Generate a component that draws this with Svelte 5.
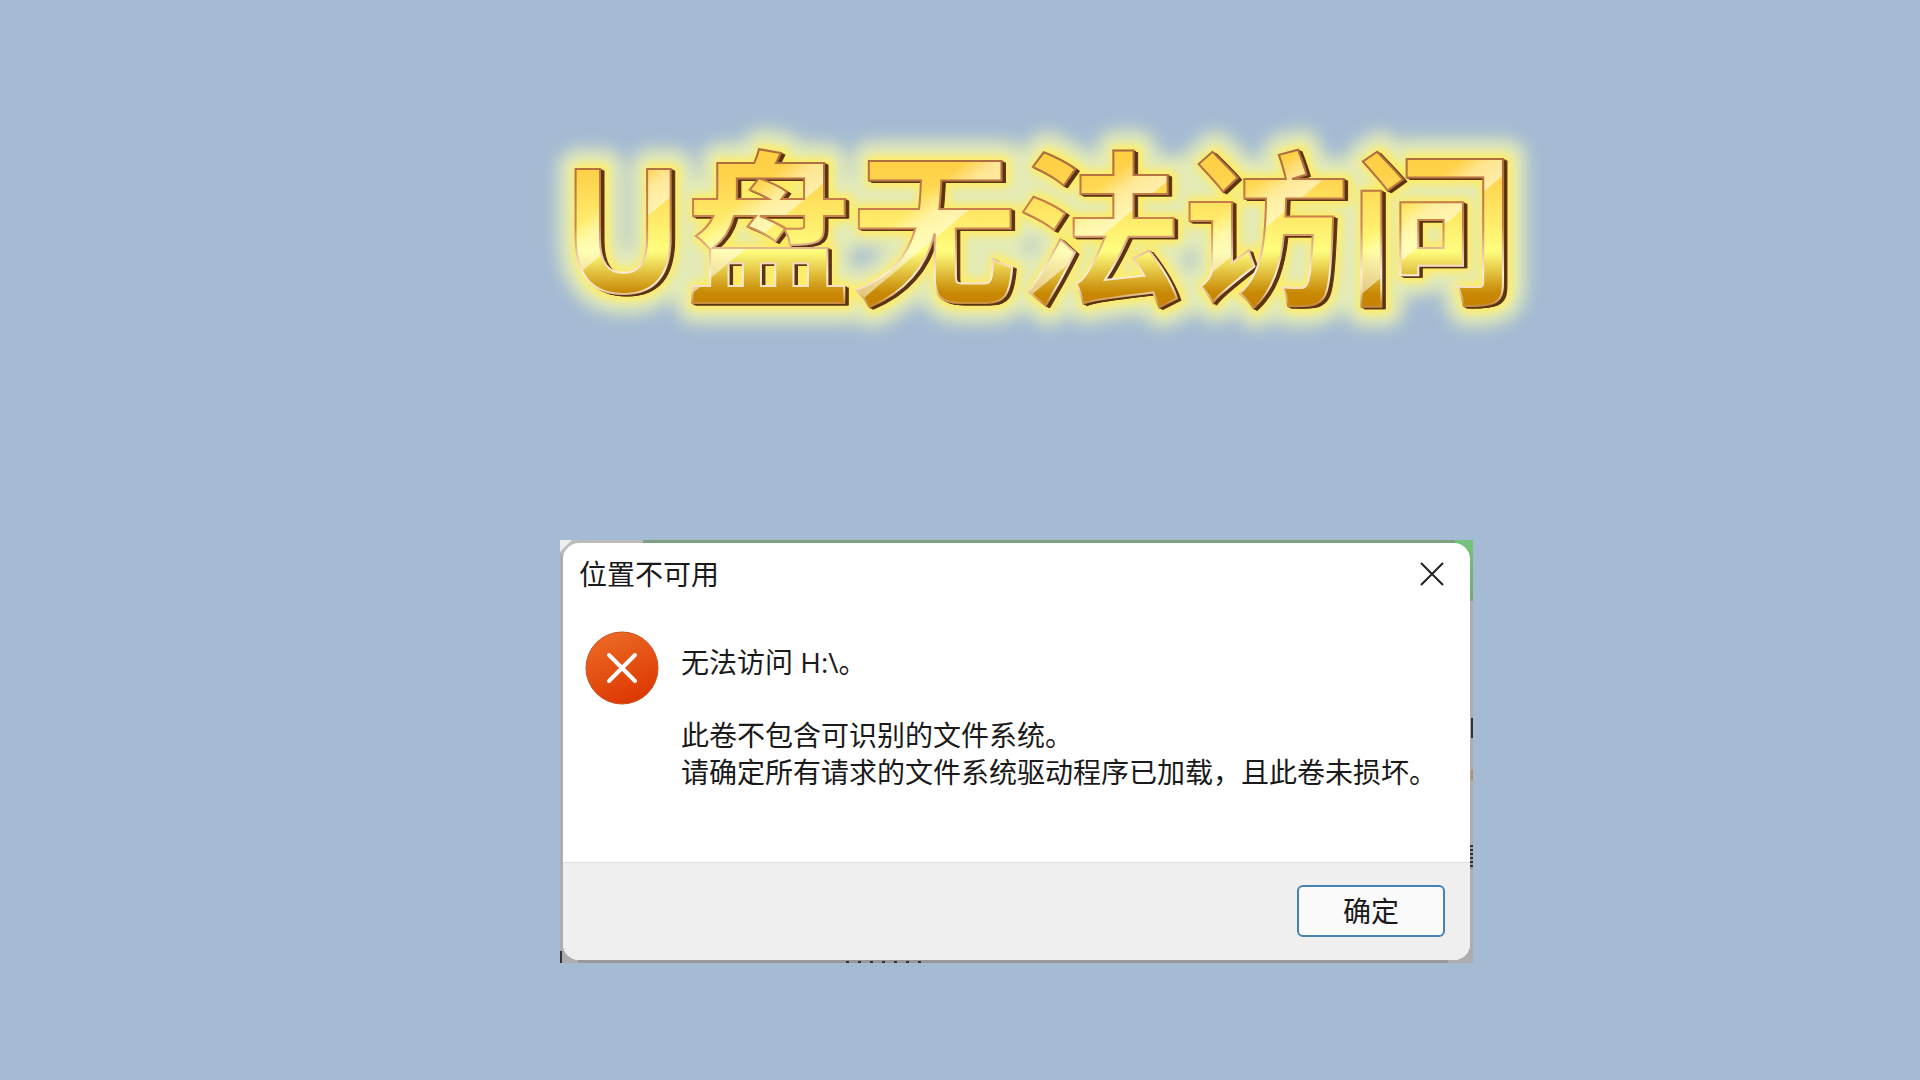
<script>
    const title = "U盘无法访问";
    const depth = [1, 2, 3, 4];

    // one shine per character: cell start, cell width, where the streak meets the baseline
    const shines = [
        { cell: 0, width: 121, foot: 0 },
        { cell: 121, width: 167, foot: 137 },
        { cell: 288, width: 166, foot: 314 },
        { cell: 454, width: 166, foot: 478 },
        { cell: 620, width: 166, foot: 632 },
        { cell: 786, width: 175, foot: 807 },
    ];

    let open = true;
    const close = () => (open = false);
</script>

<svelte:head>
    <title>{title}</title>
</svelte:head>

<main>
    <h1>
        <svg class="banner" width="968" height="200" role="img" aria-label={title}>
            <defs>
                <linearGradient id="gold" gradientUnits="userSpaceOnUse" x1="0" y1="28" x2="0" y2="180">
                    <stop offset="0" stop-color="#ffcf40" />
                    <stop offset="0.18" stop-color="#ffd24c" />
                    <stop offset="0.68" stop-color="#fffd7e" />
                    <stop offset="0.95" stop-color="#c88a06" />
                    <stop offset="1" stop-color="#c88400" />
                </linearGradient>
                <linearGradient id="rim" gradientUnits="userSpaceOnUse" x1="0" y1="28" x2="0" y2="184">
                    <stop offset="0" stop-color="#a86a3c" />
                    <stop offset="0.5" stop-color="#cf8550" />
                    <stop offset="0.8" stop-color="#fdeedd" />
                    <stop offset="0.9" stop-color="#f6dfc0" />
                    <stop offset="1" stop-color="#c48a3c" />
                </linearGradient>
                <linearGradient id="streak" gradientUnits="userSpaceOnUse" x1="-26" y1="139" x2="0" y2="170">
                    <stop offset="0" stop-color="#ffe" stop-opacity="0" />
                    <stop offset="0.5" stop-color="#ffe" stop-opacity="0.45" />
                    <stop offset="0.98" stop-color="#ffe" stop-opacity="0.55" />
                    <stop offset="1" stop-color="#ffe" stop-opacity="0" />
                </linearGradient>
                <pattern id="shine" patternUnits="userSpaceOnUse" width="968" height="200">
                    {#each shines as s}
                        <g transform="translate({s.foot} 0)">
                            <rect x={s.cell - s.foot} width={s.width} height="200" fill="url(#streak)" />
                        </g>
                    {/each}
                </pattern>
            </defs>
            <use href="#banner-text" class="halo" x="3" />
            <use href="#banner-text" class="glow" x="3" y="1" />
            {#each depth as d}
                <use href="#banner-text" class="side" x={d} y={d / 2} />
            {/each}
            <use href="#banner-text" fill="url(#gold)" />
            <use href="#banner-text" fill="url(#shine)" />
            <g class="rim">
                <text id="banner-text" x="1" y="172">{title}</text>
            </g>
        </svg>
    </h1>

    {#if open}
        <div class="frame">
            <div class="dialog" role="alertdialog" aria-labelledby="caption" aria-describedby="message">
                <header>
                    <h2 id="caption">位置不可用</h2>
                    <button class="close" aria-label="关闭" on:click={close}>
                        <svg width="24" height="24" viewBox="0 0 24 24">
                            <path d="M1 1 23 23M23 1 1 23" />
                        </svg>
                    </button>
                </header>
                <div class="body">
                    <svg class="error" width="74" height="74" viewBox="0 0 74 74" aria-hidden="true">
                        <defs>
                            <linearGradient id="red" x1="0.3" y1="0" x2="0.7" y2="1">
                                <stop offset="0" stop-color="#ec6a25" />
                                <stop offset="1" stop-color="#dc3600" />
                            </linearGradient>
                        </defs>
                        <circle cx="37" cy="37" r="36" fill="url(#red)" stroke="#c8501c" />
                        <path d="M24 24 50 50M50 24 24 50" />
                    </svg>
                    <div id="message">
                        <p>无法访问 H:\。</p>
                        <p>此卷不包含可识别的文件系统。<br />请确定所有请求的文件系统驱动程序已加载，且此卷未损坏。</p>
                    </div>
                </div>
                <footer>
                    <button class="ok" on:click={close}>确定</button>
                </footer>
            </div>
        </div>
    {/if}
</main>

<style>
    :global(body){
        margin: 0;
        background: #a5bbd3;
    }
    main{
        box-sizing: border-box;
        min-height: 100vh;
        padding: 120px 32px 116px 560px;
        display: flex;
        flex-direction: column;
        align-items: flex-start;
        gap: 220px;
        font-family: "Open Sans", "Noto Sans CJK SC", sans-serif;
        color: #1a1a1a;
    }
    h1, h2, p{
        margin: 0;
        font-weight: 400;
    }
    svg{
        display: block;
    }
    .banner{
        overflow: visible;
    }
    .banner text{
        font-family: "Noto Sans CJK SC", sans-serif;
        font-size: 166px;
        font-weight: 700;
    }
    .halo{
        fill: #f4f8b0;
        stroke: #f4f8b0;
        stroke-width: 40px;
        stroke-linejoin: round;
        filter: blur(8px);
        opacity: 0.8;
    }
    .glow{
        fill: #ffec62;
        stroke: #ffec62;
        stroke-width: 12px;
        stroke-linejoin: round;
        filter: blur(4px);
    }
    .side{
        fill: #5c3414;
        stroke: #5c3414;
        stroke-width: 1px;
    }
    .rim{
        fill: none;
        stroke: url(#rim);
        stroke-width: 2px;
    }
    /* slivers of the desktop show round the window's edge */
    .frame{
        box-sizing: border-box;
        width: 100%;
        max-width: 913px;
        padding: 3px;
        background:
            linear-gradient(#333, #333) right 0 top 178px / 2px 20px no-repeat,
            linear-gradient(#b78d68, #b78d68) right 0 top 230px / 2px 10px no-repeat,
            repeating-linear-gradient(#333 0 2px, #999 2px 4px) right 0 top 305px / 3px 24px no-repeat,
            linear-gradient(#333, #333) left 0 bottom 0 / 2px 12px no-repeat,
            repeating-linear-gradient(90deg, #333 0 3px, #999 3px 12px) left 286px bottom 0 / 76px 2px no-repeat,
            linear-gradient(135deg, #eee 8px, #bbb 9px) left top / 18px 14px no-repeat,
            linear-gradient(#74c47c, #7aa57c) right top / 18px 61px no-repeat,
            linear-gradient(90deg, #bbb 83px, #7da081 83px) left top / 100% 3px no-repeat,
            linear-gradient(#999, #999) left 18px bottom / 870px 4px no-repeat,
            #adadad;
    }
    .dialog{
        border-radius: 16px;
        overflow: hidden;
        background: #fff;
    }
    header{
        display: flex;
        justify-content: space-between;
        align-items: center;
        height: 61px;
        padding: 0 26px 0 16px;
    }
    h2{
        font-size: 28px;
        line-height: 36px;
    }
    button{
        font: inherit;
        color: inherit;
        cursor: pointer;
    }
    .close{
        padding: 0;
        border: 0;
        background: none;
    }
    .close path{
        stroke: #222;
        stroke-width: 2;
        fill: none;
    }
    .body{
        display: flex;
        align-items: flex-start;
        gap: 22px;
        padding: 27px 20px 71px 22px;
    }
    .error{
        flex: none;
    }
    .error path{
        stroke: #fff;
        stroke-width: 4;
        stroke-linecap: round;
    }
    #message{
        display: grid;
        gap: 36px;
        padding-top: 13px;
        font-size: 28px;
        line-height: 37px;
    }
    footer{
        display: flex;
        justify-content: flex-end;
        padding: 22px 25px 23px;
        border-top: 1px solid #ddd;
        background: #efefef;
    }
    .ok{
        width: 148px;
        height: 52px;
        padding: 0;
        border: 2px solid #4583b5;
        border-radius: 6px;
        background: #fbfbfb;
        font-size: 28px;
        line-height: 36px;
    }
</style>
